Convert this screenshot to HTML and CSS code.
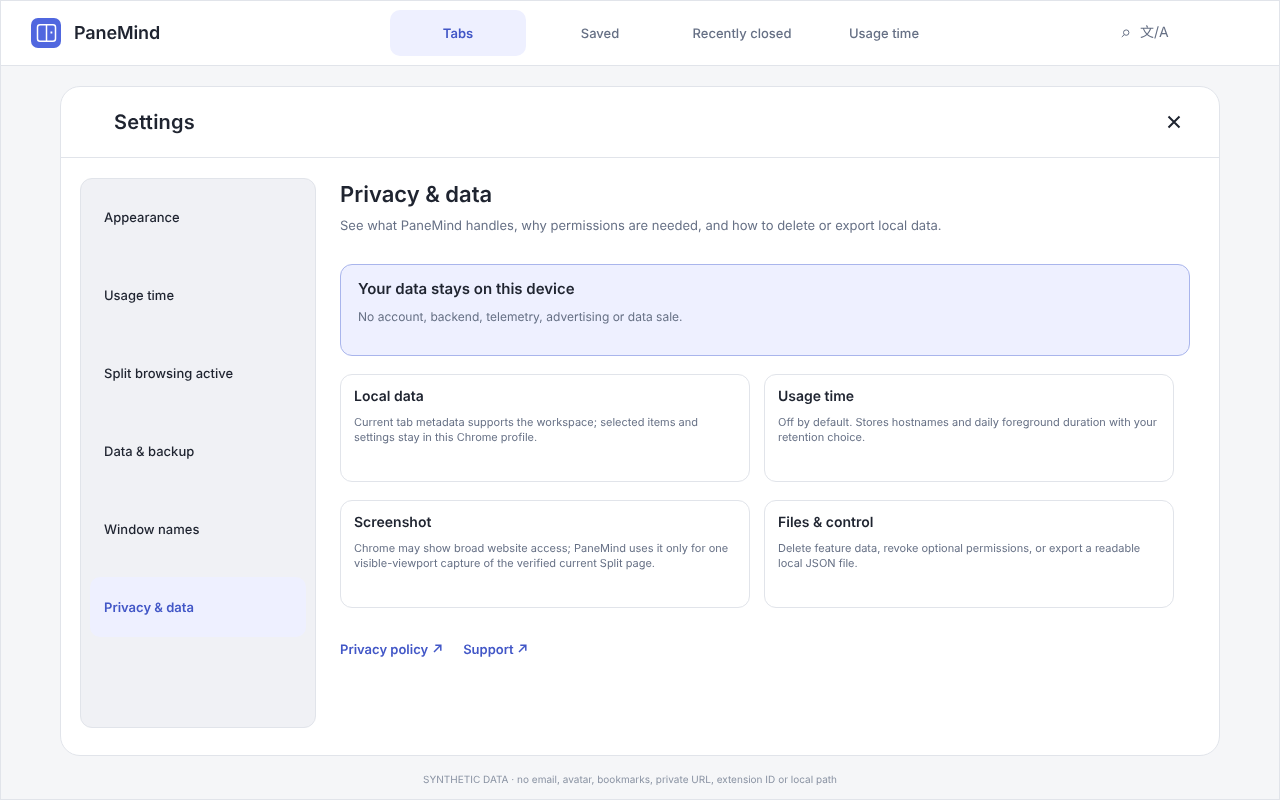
FILE: index.html
```html
<!DOCTYPE html>
<html lang="en">
<head>
<meta charset="utf-8">
<title>PaneMind</title>
<link rel="stylesheet" href="styles.css">
</head>
<body>
<div class="app">
  <header class="topbar">
    <div class="brand">
      <span class="logo">
        <svg width="30" height="30" viewBox="0 0 30 30" fill="none">
          <rect x="6.500" y="6.750" width="18" height="16.500" rx="2.500" stroke="#fff" stroke-width="1.500"/>
          <path d="M15.500 6.750v16.500" stroke="#fff" stroke-width="1.500"/>
          <rect x="19.500" y="13.500" width="1.800" height="2" fill="#fff"/>
        </svg>
      </span>
      <span class="brand-name">PaneMind</span>
    </div>
    <nav class="tabs">
      <a class="tab active">Tabs</a>
      <a class="tab">Saved</a>
      <a class="tab">Recently closed</a>
      <a class="tab">Usage time</a>
    </nav>
    <div class="tools">
      <svg class="search" width="9" height="9" viewBox="0 0 9 9" fill="none">
        <circle cx="5.200" cy="3.600" r="2.700" stroke="#667085" stroke-width="1"/>
        <path d="M3.300 5.600L0.800 8" stroke="#667085" stroke-width="1"/>
      </svg>
      <span class="lang">文/A</span>
    </div>
  </header>
  <main class="stage">
    <section class="modal">
      <div class="modal-head">
        <h1 class="modal-title">Settings</h1>
        <svg class="close" width="14" height="14" viewBox="0 0 14 14" fill="none">
          <path d="M1.500 1.500l11 11M12.500 1.500l-11 11" stroke="#1f2430" stroke-width="2"/>
        </svg>
      </div>
      <div class="modal-body">
        <aside class="side">
          <a class="side-item">Appearance</a>
          <a class="side-item">Usage time</a>
          <a class="side-item">Split browsing active</a>
          <a class="side-item">Data &amp; backup</a>
          <a class="side-item">Window names</a>
          <a class="side-item active">Privacy &amp; data</a>
        </aside>
        <div class="content">
          <h2 class="content-title">Privacy &amp; data</h2>
          <p class="content-sub">See what PaneMind handles, why permissions are needed, and how to delete or export local data.</p>
          <div class="hero">
            <h3 class="hero-title">Your data stays on this device</h3>
            <p class="hero-text">No account, backend, telemetry, advertising or data sale.</p>
          </div>
          <div class="cards">
            <article class="card">
              <h4 class="card-title">Local data</h4>
              <p class="card-text">Current tab metadata supports the workspace; selected items and settings stay in this Chrome profile.</p>
            </article>
            <article class="card">
              <h4 class="card-title">Usage time</h4>
              <p class="card-text">Off by default. Stores hostnames and daily foreground duration with your retention choice.</p>
            </article>
            <article class="card">
              <h4 class="card-title">Screenshot</h4>
              <p class="card-text">Chrome may show broad website access; PaneMind uses it only for one visible-viewport capture of the verified current Split page.</p>
            </article>
            <article class="card">
              <h4 class="card-title">Files &amp; control</h4>
              <p class="card-text">Delete feature data, revoke optional permissions, or export a readable local JSON file.</p>
            </article>
          </div>
          <div class="links">
            <a class="link">Privacy policy
              <svg class="arrow" width="9" height="9" viewBox="0 0 9 9" fill="none"><path d="M1 8L7.700 1.300M2.300 1.200H7.800V6.700" stroke="#4257c7" stroke-width="1.500"/></svg>
            </a>
            <a class="link">Support
              <svg class="arrow" width="9" height="9" viewBox="0 0 9 9" fill="none"><path d="M1 8L7.700 1.300M2.300 1.200H7.800V6.700" stroke="#4257c7" stroke-width="1.500"/></svg>
            </a>
          </div>
        </div>
      </div>
    </section>
    <footer class="note">SYNTHETIC DATA · no email, avatar, bookmarks, private URL, extension ID or local path</footer>
  </main>
</div>
</body>
</html>
```
FILE: styles.css
```css
* { box-sizing: border-box; }
html, body { margin: 0; padding: 0; }
body { font-family: Inter, "Noto Sans CJK SC", sans-serif; color: #1f2430; background: #f5f6f8; text-rendering: geometricPrecision; }
h1, h2, h3, h4, p { margin: 0; }
.app { width: 1280px; height: 800px; border: 1px solid #e1e4ea; display: flex; flex-direction: column; overflow: hidden; will-change: transform; }
.topbar { height: 65px; flex: none; background: #fff; border-bottom: 1px solid #e1e4ea; display: flex; align-items: center; padding: 0 0 0 30px; }
.brand { display: flex; align-items: center; gap: 13px; width: 359px; }
.logo { width: 30px; height: 30px; border-radius: 7px; background: #5067df; display: block; }
.logo svg { display: block; }
.brand-name { font-size: 18px; font-weight: 600; line-height: 30px; letter-spacing: -0.006em; padding-top: 2px; }
.tabs { display: flex; gap: 6px; }
.tab { width: 136px; height: 46px; padding-top: 2px; border-radius: 10px; display: flex; align-items: center; justify-content: center; font-size: 13px; font-weight: 500; color: #667085; }
.tab.active { background: #eef0ff; color: #4257c7; font-weight: 600; }
.tools { display: flex; align-items: center; gap: 10px; margin-left: 169px; color: #667085; margin-top: -2px; }
.search { display: block; margin-top: 2px; }
.lang { font-size: 14px; }
.stage { flex: 1; display: flex; flex-direction: column; align-items: center; padding-top: 20px; }
.modal { width: 1160px; height: 670px; flex: none; background: #fff; border: 1px solid #e1e4ea; border-radius: 20px; display: flex; flex-direction: column; }
.modal-head { height: 71px; flex: none; border-bottom: 1px solid #e1e4ea; display: flex; align-items: center; justify-content: space-between; padding: 0 38px 0 53px; }
.modal-title { font-size: 20px; font-weight: 600; line-height: 28px; letter-spacing: 0.2px; }
.close { display: block; }
.modal-body { flex: 1; display: flex; padding: 20px 29px 27px 19px; gap: 24px; min-height: 0; }
.side { width: 236px; flex: none; background: #f0f1f5; border: 1px solid #e1e4ea; border-radius: 12px; padding: 9px; display: flex; flex-direction: column; gap: 18px; }
.side-item { height: 60px; flex: none; display: flex; align-items: center; padding: 2px 14px 0; font-size: 13px; font-weight: 500; border-radius: 10px; margin-top: -1px; margin-bottom: 1px; }
.side-item.active { background: #eef0ff; color: #4257c7; font-weight: 600; }
.content { flex: 1; min-width: 0; }
.content-title { font-size: 22px; font-weight: 600; line-height: 32px; padding-top: 1px; height: 33px; }
.content-sub { font-size: 13px; line-height: 20px; color: #667085; margin-top: 5px; }
.hero { margin-top: 28px; height: 92px; background: #eef0ff; border: 1px solid #a9b5ec; border-radius: 12px; padding: 14px 17px; }
.hero-title { font-size: 15px; font-weight: 600; line-height: 20px; }
.hero-text { font-size: 12px; line-height: 18px; color: #667085; margin-top: 9px; letter-spacing: 0.015px; }
.cards { display: grid; grid-template-columns: 410px 410px; grid-auto-rows: 108px; gap: 18px 14px; margin-top: 18px; }
.card { background: #fff; border: 1px solid #e1e4ea; border-radius: 12px; padding: 12px 13px; }
.card-title { font-size: 14px; font-weight: 600; line-height: 20px; }
.card-text { font-size: 11px; line-height: 15px; color: #667085; margin-top: 8px; }
.links { display: flex; gap: 21.500px; margin-top: 32px; }
.link { display: flex; align-items: center; gap: 4.500px; font-size: 13px; font-weight: 600; line-height: 20px; color: #4257c7; }
.arrow { display: block; margin-top: -3px; }
.note { margin-top: 17px; padding-right: 20px; width: 100%; text-align: center; font-size: 10px; line-height: 14px; letter-spacing: 0.015px; color: #8a93a3; }
```
